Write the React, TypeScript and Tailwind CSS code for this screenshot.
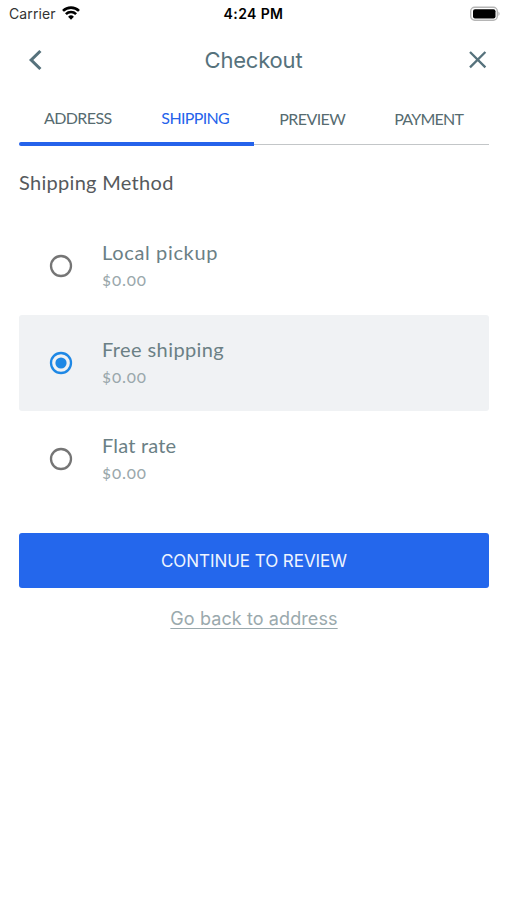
import React from 'react';

const tabs = [
  { label: 'ADDRESS', className: 'text-[#566b70] pb-px tracking-[-0.6px]' },
  { label: 'SHIPPING', className: 'text-[#2563eb] pb-px tracking-[-0.65px]' },
  { label: 'PREVIEW', className: 'text-[#566b70] pt-px pr-px tracking-[-0.6px]' },
  { label: 'PAYMENT', className: 'text-[#566b70] pt-px pr-[3px] tracking-[-0.75px]' },
];

const methods = [
  { name: 'Local pickup', price: '$0.00', selected: false, spacing: 'tracking-[0.65px]' },
  { name: 'Free shipping', price: '$0.00', selected: true, spacing: 'tracking-[0.4px]' },
  { name: 'Flat rate', price: '$0.00', selected: false, spacing: 'tracking-[0.2px]' },
];

function StatusBar() {
  return (
    <div className="flex h-7 items-center justify-between pl-[9px] pr-[6px] text-black">
      <div className="flex w-[120px] items-center gap-[6px]">
        <span className="-mt-px text-[14px] tracking-[0.1px] text-[#333]">Carrier</span>
        <svg className="-mt-[2px]" width="18" height="14" viewBox="0 0 18 14" fill="none" stroke="currentColor" strokeWidth="2.6">
          <path d="M1 4.9a11.4 11.4 0 0 1 16 0" />
          <path d="M3.9 8.1a7.3 7.3 0 0 1 10.2 0" />
          <path d="M9 13.7 6.1 10.8a4.1 4.1 0 0 1 5.8 0z" fill="currentColor" stroke="none" />
        </svg>
      </div>
      <span className="-mt-[2px] text-[14px] font-semibold tracking-[0.4px]">4:24 PM</span>
      <div className="flex w-[123px] justify-end">
        <svg className="-mt-px" width="32" height="16" viewBox="0 0 32 16">
          <rect x="1.7" y="1.2" width="26.6" height="13" rx="4" fill="#fff" stroke="#b5b5b5" strokeWidth="1.4" />
          <rect x="4" y="3.2" width="22.5" height="9.2" rx="2" fill="#000" />
          <path d="M29.4 5.6a2.6 2.6 0 0 1 0 4.4z" fill="#b5b5b5" />
        </svg>
      </div>
    </div>
  );
}

function Header() {
  return (
    <header className="flex h-16 items-center justify-between pl-7 pr-[18px] text-[#56727c]">
      <button aria-label="Back">
        <svg width="16" height="22" viewBox="0 0 16 22" fill="none" stroke="currentColor" strokeWidth="3.1">
          <path d="M12.4 2 3.2 11l9.2 9" />
        </svg>
      </button>
      <h1 className="pr-[4px] text-[22px] tracking-[-0.2px]">Checkout</h1>
      <button aria-label="Close">
        <svg width="22" height="22" viewBox="0 0 22 22" fill="none" stroke="currentColor" strokeWidth="2.3">
          <path d="M3 3l15.4 15.4M18.4 3 3 18.4" />
        </svg>
      </button>
    </header>
  );
}

function Radio({ selected }: { selected: boolean }) {
  const color = selected ? '#1e88e5' : '#757575';
  return (
    <svg width="24" height="24" viewBox="0 0 24 24" fill="none">
      <circle cx="12" cy="12" r="10" stroke={color} strokeWidth="2.3" />
      {selected && <circle cx="12" cy="12" r="5.6" fill={color} />}
    </svg>
  );
}

export default function App() {
  return (
    <div className="h-[900px] w-[507px] overflow-hidden bg-white font-['Inter',sans-serif]">
      <StatusBar />
      <Header />
      <main className="ml-[19px] w-[470px] font-['Lato',sans-serif]">
        <nav className="grid h-[50px] grid-cols-4 text-center text-[16px] leading-[52px]">
          {tabs.map((tab) => (
            <a key={tab.label} href="#" className={tab.className}>
              {tab.label}
            </a>
          ))}
        </nav>
        <div className="flex h-1 items-center">
          <div className="h-[4px] w-1/2 rounded-l-full bg-[#2563eb]" />
          <div className="h-px w-1/2 bg-[#c3c6c8]" />
        </div>

        <h2 className="mt-5 h-[52px] text-[20px] leading-8 tracking-[0.3px] text-[#56595c]">
          Shipping Method
        </h2>

        {methods.map((method) => (
          <label
            key={method.name}
            className={
              'flex h-[96.5px] items-center rounded-[3px] pl-[30px] ' +
              (method.selected ? 'bg-[#f0f2f4]' : '')
            }
          >
            <Radio selected={method.selected} />
            <span className="ml-[29px] flex flex-col">
              <span className={'text-[20px] leading-7 text-[#6b8085] ' + method.spacing}>{method.name}</span>
              <span className="text-[17px] leading-7 tracking-[0.8px] text-[#9aa8ac] oldstyle-nums">
                {method.price}
              </span>
            </span>
          </label>
        ))}

        <div className="mt-[25px] text-center font-['Inter',sans-serif]">
          <button className="h-[55px] w-full rounded-[3px] bg-[#2467ec] pt-[3px] text-[17px] tracking-[-0.05px] text-[#eef4ff]">
            CONTINUE TO REVIEW
          </button>
          <a
            href="#"
            className="mt-[17px] inline-block text-[18px] leading-7 tracking-[0.1px] text-[#9aa9ad] underline decoration-1 underline-offset-[3px]"
          >
            Go back to address
          </a>
        </div>
      </main>
    </div>
  );
}
